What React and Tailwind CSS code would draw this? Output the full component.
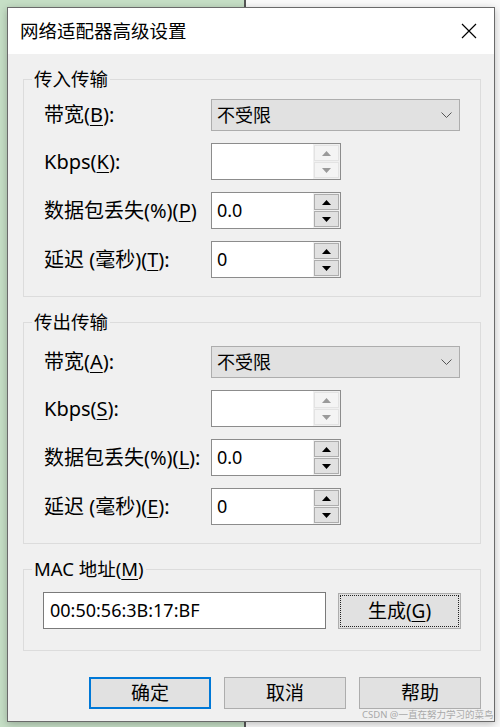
import React from "react";

const font = "font-['Noto_Sans','Noto_Sans_CJK_SC',sans-serif]";

function Acc({ children }) {
  return <span className="underline decoration-1 underline-offset-[3px]">{children}</span>;
}

function Select() {
  return (
    <div className="flex h-[32px] w-[249px] items-center justify-between border border-[#adadad] bg-[#e1e1e1] pl-[5px] pr-[7px] text-[18px]">
      <span>不受限</span>
      <svg width="11" height="6" viewBox="0 0 11 6">
        <polyline points="0.5,0.5 5.5,5.5 10.5,0.5" fill="none" stroke="#555" strokeWidth="1" />
      </svg>
    </div>
  );
}

function Arrow({ up, disabled }) {
  return (
    <svg width="9" height="5" viewBox="0 0 9 5">
      <polygon points={up ? "4.5,0 9,5 0,5" : "0,0 9,0 4.5,5"} fill={disabled ? "#9a9a9a" : "#000"} />
    </svg>
  );
}

function Spin({ value, disabled }) {
  const btn = disabled ? "border-[#e3e3e3] bg-[#f4f4f4]" : "border-[#adadad] bg-[#e1e1e1]";
  return (
    <div className="flex h-[37px] w-[130px] border border-[#8c8c8c]">
      <div className="flex flex-1 items-center bg-white pl-[5px] text-[18px]">{value}</div>
      <div className="flex w-[27px] flex-col gap-[1px] bg-[#f0f0f0] p-[1px]">
        <div className={`flex flex-1 items-center justify-center border ${btn}`}>
          <Arrow up disabled={disabled} />
        </div>
        <div className={`flex flex-1 items-center justify-center border ${btn}`}>
          <Arrow disabled={disabled} />
        </div>
      </div>
    </div>
  );
}

function Group({ title, className, children }) {
  return (
    <fieldset className={`ml-[15px] mr-[13px] border border-[#dcdcdc] px-[8px] ${className}`}>
      <legend className="px-[2px] text-[18.5px] leading-[24px]">{title}</legend>
      <div className="pl-[12px]">{children}</div>
    </fieldset>
  );
}

function Transfer({ title, keys, className }) {
  return (
    <Group title={title} className={className}>
      <div className="grid grid-cols-[167px_auto] items-center gap-y-[12px] text-[20px]">
        <span>
          带宽(<Acc>{keys[0]}</Acc>):
        </span>
        <Select />
        <span>
          Kbps(<Acc>{keys[1]}</Acc>):
        </span>
        <Spin value="" disabled />
        <span>
          数据包丢失(%)(<Acc>{keys[2]}</Acc>){keys[2] === "L" ? ":" : ""}
        </span>
        <Spin value="0.0" />
        <span>
          延迟 (毫秒)(<Acc>{keys[3]}</Acc>):
        </span>
        <Spin value="0" />
      </div>
    </Group>
  );
}

function Button({ children, primary }) {
  return (
    <button
      className={`flex h-[32px] w-[122px] items-center justify-center bg-[#e1e1e1] text-[19px] ${
        primary ? "border-2 border-[#0078d7]" : "border border-[#adadad]"
      }`}
    >
      {children}
    </button>
  );
}

export default function App() {
  return (
    <div
      className={`relative h-[727px] w-[500px] overflow-hidden bg-[linear-gradient(to_right,#c6dfc6_0,#c6dfc6_244px,#555_244px,#555_246px,#fafafa_246px)] pl-[7px] pt-[7px] text-black ${font}`}
    >
      <div className="w-[488px] border border-[#6a6a6a] bg-[#f0f0f0] shadow-[0_2px_8px_rgba(0,0,0,0.25)]">
        <div className="flex h-[46px] items-center justify-between bg-white pl-[12px] pr-[17px]">
          <span className="text-[18.5px]">网络适配器高级设置</span>
          <svg width="16" height="16" viewBox="0 0 16 16">
            <path d="M1 1 L15 15 M15 1 L1 15" stroke="#000" strokeWidth="1.2" fill="none" />
          </svg>
        </div>

        <Transfer title="传入传输" keys={["B", "K", "P", "T"]} className="mt-[13px] pt-[8px] pb-[18px]" />
        <Transfer title="传出传输" keys={["A", "S", "L", "E"]} className="mt-[13px] pt-[12px] pb-[18px]" />

        <Group
          title={
            <>
              MAC 地址(<Acc>M</Acc>)
            </>
          }
          className="mt-[13px] pt-[11px] pb-[21px]"
        >
          <div className="ml-[-1px] flex items-start gap-[12px]">
            <div className="flex h-[37px] w-[283px] items-center border border-[#7a7a7a] bg-white pl-[6px] text-[18px]">
              00:50:56:3B:17:BF
            </div>
            <button className="mt-[1px] flex h-[36px] w-[123px] items-center justify-center border border-[#adadad] bg-[#e1e1e1] text-[19px] outline-1 outline-dotted outline-[#222] outline-offset-[-3px]">
              生成(<Acc>G</Acc>)
            </button>
          </div>
        </Group>

        <div className="mr-[13px] mt-[26px] flex justify-end gap-[13px] pb-[12px]">
          <Button primary>确定</Button>
          <Button>取消</Button>
          <Button>帮助</Button>
        </div>
      </div>

      <div className="absolute left-[362px] top-[708px] text-[9.5px] text-[#a9a9a9]">CSDN @一直在努力学习的菜鸟</div>
    </div>
  );
}
